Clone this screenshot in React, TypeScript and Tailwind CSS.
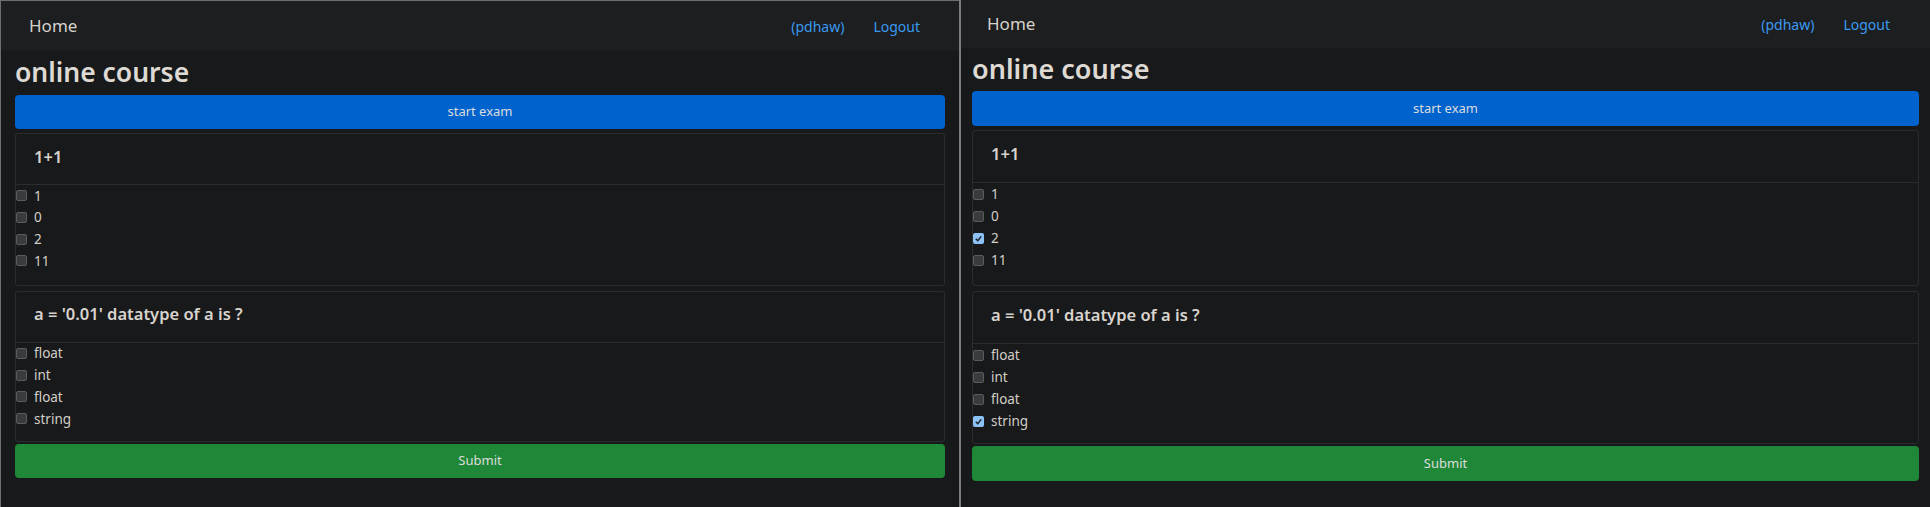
import React from "react";

type Question = {
  title: string;
  options: string[];
};

const questions: Question[] = [
  { title: "1+1", options: ["1", "0", "2", "11"] },
  { title: "a = '0.01' datatype of a is ?", options: ["float", "int", "float", "string"] },
];

const Box: React.FC<{ checked: boolean }> = ({ checked }) =>
  checked ? (
    <span className="w-[11px] h-[11px] rounded-[2px] bg-[#8cc2f5] flex items-center justify-center shrink-0">
      <svg width="9" height="9" viewBox="0 0 10 10">
        <path d="M2 5.2 L4.2 7.4 L8 2.6" fill="none" stroke="#1a1c1e" strokeWidth="1.6" />
      </svg>
    </span>
  ) : (
    <span className="w-[11px] h-[11px] rounded-[2px] bg-[#3a3b3d] border border-[#5b5c5e] shrink-0" />
  );

type PanelProps = {
  picked: number[][];
  navH: string;
  homePad: string;
  linksPad: string;
  titleBox: string;
  btnH: string;
  rowH: string;
  headH: string;
  card1Pb: string;
  card2Pb: string;
  gap2: string;
  cardGap: string;
  pad: string;
};

const Panel: React.FC<PanelProps> = (p) => (
  <div className="flex flex-col flex-1 min-w-0 bg-[#18191b]">
    {/* navbar */}
    <div className={`${p.navH} bg-[#1c1e20] flex items-center justify-between`}>
      <a className={`${p.homePad} text-[17px] text-[#d6d2cb]`}>Home</a>
      <div className={`${p.linksPad} flex items-center gap-[29px] text-[14px] text-[#3a9af0]`}>
        <a>(pdhaw)</a>
        <a>Logout</a>
      </div>
    </div>

    <div className={`${p.pad} flex flex-col`}>
      <h1 className={`${p.titleBox} font-semibold text-[#dedad3] flex items-center`}>
        online course
      </h1>
      <button className={`${p.btnH} w-full rounded-[4px] bg-[#0062cd] text-[13px] text-[#dcdcdc]`}>
        start exam
      </button>

      <div className={`flex flex-col ${p.cardGap}`}>
        {questions.map((q, qi) => (
          <div
            key={qi}
            className={`border border-[#2a2c2e] rounded-[3px] ${qi === 0 ? p.card1Pb : p.card2Pb}`}
          >
            <div className={`${p.headH} border-b border-[#2a2c2e] flex items-center pl-[18px] pb-[4px] text-[16.5px] font-semibold text-[#d8d4cd]`}>
              {q.title}
            </div>
            {q.options.map((o, oi) => (
              <label key={oi} className={`${p.rowH} flex items-center gap-[7px] text-[13.5px] text-[#d2cec7]`}>
                <Box checked={p.picked[qi].includes(oi)} />
                <span>{o}</span>
              </label>
            ))}
          </div>
        ))}
      </div>

      <button className={`${p.gap2} ${p.btnH} w-full rounded-[4px] bg-[#1f8838] text-[13px] text-[#dcdcdc]`}>
        Submit
      </button>
    </div>
  </div>
);

const App: React.FC = () => {
  return (
    <div
      className="w-[1930px] h-[507px] flex bg-[#18191b] overflow-hidden"
      style={{ fontFamily: "'Noto Sans', 'Open Sans', sans-serif" }}
    >
      <div className="w-[959px] h-full flex border-t border-l border-[#6e6e6e]">
        <Panel
          picked={[[], []]}
          navH="h-[50px]"
          homePad="pl-[28px]"
          linksPad="pr-[39px]"
          titleBox="h-[44px] text-[26.5px]"
          btnH="h-[34px]"
          rowH="h-[21.7px]"
          headH="h-[51px]"
          card1Pb="pb-[13px]"
          card2Pb="pb-[11px]"
          gap2="mt-[2px]"
          cardGap="gap-[5px] mt-[4px]"
          pad="px-[14px]"
        />
      </div>
      <div className="w-[2px] h-full bg-[#7c7c7c]" />
      <div className="flex-1 h-full flex">
        <Panel
          picked={[[2], [3]]}
          navH="h-[48px]"
          homePad="pl-[26px]"
          linksPad="pr-[40px]"
          titleBox="h-[43px] text-[27px]"
          btnH="h-[35px]"
          rowH="h-[22px]"
          headH="h-[52px]"
          card1Pb="pb-[14px]"
          card2Pb="pb-[11px]"
          gap2="mt-[2px]"
          cardGap="gap-[5px] mt-[4px]"
          pad="px-[11px]"
        />
      </div>
    </div>
  );
};

export default App;
